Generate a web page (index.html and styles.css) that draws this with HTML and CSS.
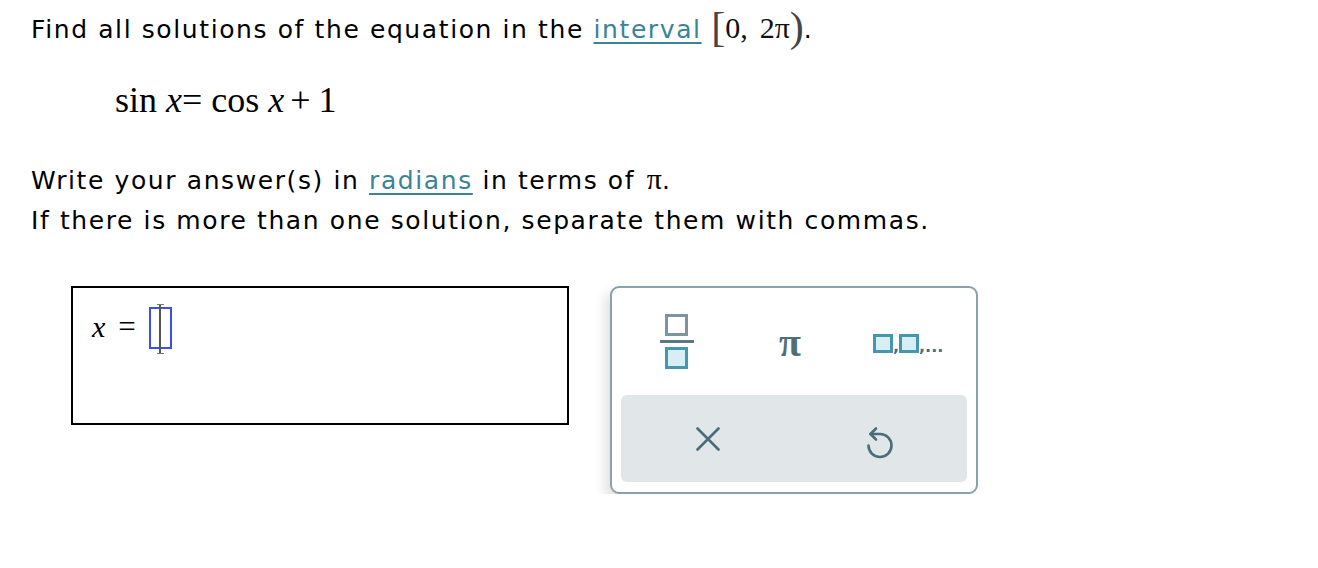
FILE: index.html
```html
<!DOCTYPE html>
<html>
<head>
<meta charset="utf-8">
<link rel="stylesheet" href="styles.css">
</head>
<body>
<div class="page">
  <p class="line first">Find all solutions of the equation in the <a class="link" href="#">interval</a> <span class="interval"><span class="brk">[</span>0,<span class="gap"></span>2π<span class="brk">)</span></span>.</p>
  <div class="equation">sin <i>x</i>= cos <i>x</i><span class="op">+</span>1</div>
  <p class="line">Write your answer(s) in <a class="link" href="#">radians</a> in terms of <span class="pi">π</span>.</p>
  <p class="line">If there is more than one solution, separate them with commas.</p>
  <div class="work">
    <div class="answer">
      <span class="var">x</span><span class="eq">=</span><span class="cursor"></span>
    </div>
    <div class="panel">
      <div class="keys">
        <button class="key">
          <svg width="36" height="56" viewBox="0 0 36 56">
            <rect x="7.5" y="1.5" width="20" height="19" fill="#fff" stroke="#7c959f" stroke-width="3"/>
            <rect x="1" y="26" width="34" height="3" fill="#5b7885"/>
            <rect x="7.5" y="34.5" width="20" height="19" fill="#d6eef4" stroke="#4398b0" stroke-width="3"/>
          </svg>
        </button>
        <button class="key pikey">π</button>
        <button class="key boxes">
          <span class="sq"></span><span class="cm">,</span><span class="sq"></span><span class="cm">,...</span>
        </button>
      </div>
      <div class="actions">
        <button class="act clear">
          <svg width="24" height="24" viewBox="0 0 24 24">
            <path d="M1.5 1.5 L22.5 22.5 M22.5 1.5 L1.5 22.5" stroke="#4b6c79" stroke-width="2.6" stroke-linecap="round" fill="none"/>
          </svg>
        </button>
        <button class="act undo">
          <svg width="32" height="36" viewBox="0 0 32 36">
            <path d="M6.5 11 L16 11 A11.5 11.5 0 1 1 4.5 22.5" stroke="#4b6c79" stroke-width="2.6" stroke-linecap="round" fill="none"/>
            <path d="M12 5.5 L6.5 11 L12 16.5" stroke="#4b6c79" stroke-width="2.6" stroke-linecap="round" stroke-linejoin="round" fill="none"/>
          </svg>
        </button>
      </div>
    </div>
  </div>
</div>
</body>
</html>
```

FILE: styles.css
```css
html, body {
  margin: 0;
  padding: 0;
  background: #fff;
}
.page {
  padding: 7px 0 0 31px;
  font-family: "DejaVu Sans", Verdana, sans-serif;
  font-size: 25px;
  letter-spacing: 1.6px;
  color: #000;
}
.line {
  margin: 0;
  line-height: 40px;
  white-space: nowrap;
}
.first {
  margin-bottom: 30px;
}
.link {
  color: #3b8396;
  text-decoration: underline;
  text-decoration-thickness: 1.5px;
  text-underline-offset: 4px;
}
.interval {
  font-family: "Liberation Serif", "Times New Roman", serif;
  font-size: 30px;
  letter-spacing: 0;
  color: #111;
}
.gap {
  display: inline-block;
  width: 12px;
}
.brk {
  font-size: 42px;
  font-weight: 300;
  color: #444;
  vertical-align: -3px;
}
.pi {
  font-family: "Liberation Serif", serif;
  font-size: 30px;
  letter-spacing: 0;
  margin-left: 2px;
}
.equation {
  font-family: "Liberation Serif", "Times New Roman", serif;
  font-size: 36px;
  letter-spacing: 0;
  margin: 0 0 39px 84px;
  line-height: 40px;
}
.op {
  margin: 0 8px 0 6px;
}
.work {
  display: flex;
  align-items: flex-start;
  margin-top: 44px;
  margin-left: 40px;
  gap: 41px;
  letter-spacing: 0;
}
.answer {
  width: 494px;
  height: 135px;
  border: 2px solid #000;
  display: flex;
  align-items: flex-start;
  margin-top: 1px;
}
.var {
  font-family: "Liberation Serif", serif;
  font-style: italic;
  font-size: 30px;
  margin: 24px 0 0 19px;
  line-height: 30px;
}
.eq {
  font-family: "Liberation Serif", serif;
  font-size: 31px;
  margin: 24px 0 0 13px;
  line-height: 30px;
}
.cursor {
  width: 23px;
  height: 42px;
  margin: 19px 0 0 13px;
  box-sizing: border-box;
  border: 2px solid #3f4ef0;
  position: relative;
}
.cursor::before {
  content: "";
  position: absolute;
  left: 8.5px;
  top: -5px;
  width: 2px;
  height: 50px;
  background: #555;
}
.cursor::after {
  content: "";
  position: absolute;
  left: 6px;
  top: -5px;
  width: 7px;
  height: 48px;
  border-top: 1px solid #777;
  border-bottom: 1px solid #777;
}
.panel {
  width: 346px;
  height: 194px;
  border: 2px solid #8ba0aa;
  border-radius: 9px;
  box-shadow: -5px 6px 12px rgba(0,0,0,0.12);
  padding: 0 9px 10px 9px;
  display: flex;
  flex-direction: column;
  background: #fff;
  margin-top: 1px;
}
.keys {
  display: flex;
  align-items: center;
  height: 107px;
  padding: 0 0 0 38px;
}
.key {
  background: none;
  border: 0;
  padding: 0;
  display: flex;
  align-items: center;
  cursor: pointer;
}
.pikey {
  font-family: "Liberation Serif", serif;
  font-size: 40px;
  font-weight: bold;
  color: #4e6e7a;
  margin-left: 84px;
  margin-top: 2px;
}
.boxes {
  margin-left: 72px;
  align-items: flex-end;
  margin-top: 4px;
}
.sq {
  width: 14px;
  height: 13px;
  border: 3px solid #4398b0;
  background: #d6eef4;
  display: inline-block;
}
.cm {
  font-family: "DejaVu Sans", sans-serif;
  font-size: 16px;
  font-weight: bold;
  color: #4e6e7a;
  line-height: 12px;
  letter-spacing: 0;
}
.actions {
  flex: 1;
  background: #e1e6e9;
  border-radius: 6px;
  display: flex;
  align-items: center;
  padding: 0 0 0 75px;
}
.act {
  background: none;
  border: 0;
  padding: 0;
  display: flex;
  cursor: pointer;
}
.undo {
  margin-left: 144px;
  margin-top: 5px;
}
```
